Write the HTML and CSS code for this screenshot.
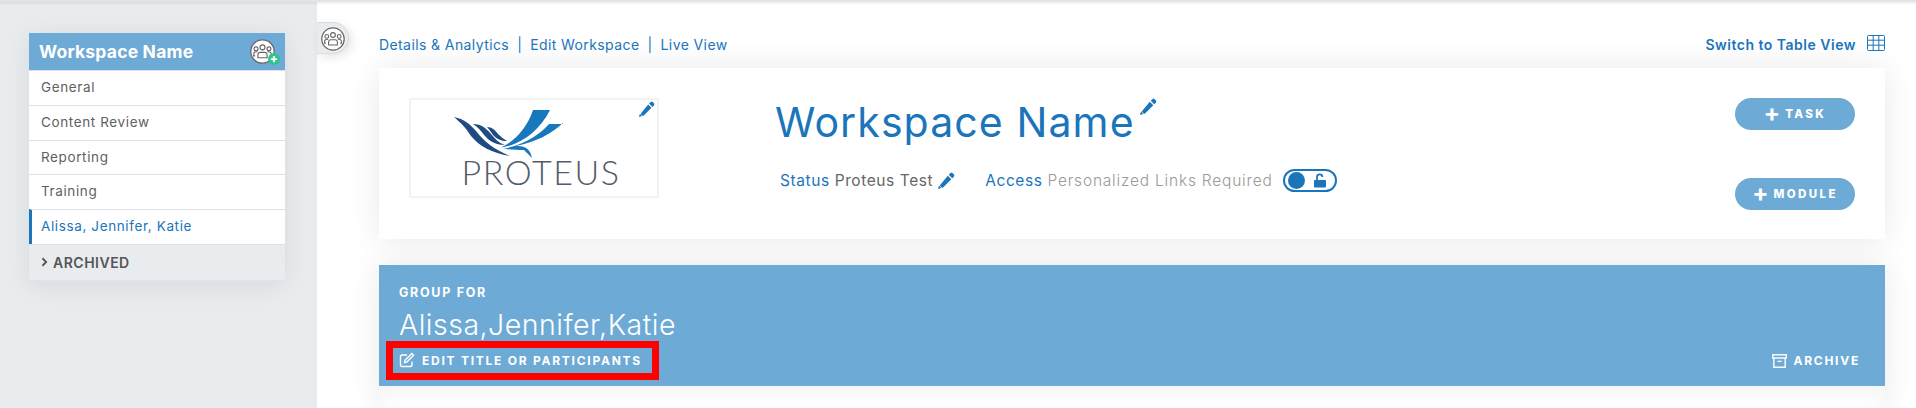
FILE: index.html
```html
<!DOCTYPE html>
<html lang="en">
<head>
    <meta charset="UTF-8">
    <meta name="viewport" content="width=device-width, initial-scale=1.0">
    <title>Workspace Name</title>
    <link rel="stylesheet" href="styles.css">
</head>
<body>
    <svg class="sprites" width="0" height="0">
        <symbol id="pencil" viewBox="0 0 16 16">
            <path d="M11.6 1.1a1.6 1.6 0 0 1 2.2 0l1.1 1.1a1.6 1.6 0 0 1 0 2.2l-1.5 1.5-3.3-3.3zM9.2 3.5l3.3 3.3-7.7 7.7-1 .4-2-2 .4-1z"/>
            <path d="M.9 12.8l2.3 2.3-3.2.9z"/>
        </symbol>
        <symbol id="people" viewBox="0 0 24 24">
            <circle cx="12" cy="12" r="11.2" fill="#fff" stroke="#666" stroke-width="1.2"/>
            <g fill="none" stroke="#666" stroke-width="1.1">
                <circle cx="12" cy="8" r="2.4"/>
                <circle cx="5.8" cy="9.4" r="1.9"/>
                <circle cx="18.2" cy="9.4" r="1.9"/>
                <path d="M7.6 18v-3a2.2 2.2 0 0 1 2.2-2.2h4.4a2.2 2.2 0 0 1 2.2 2.2v3z"/>
                <path d="M5 16.2H3.6v-1.6a2.4 2.4 0 0 1 2.4-2.4h1.2M19 16.2h1.4v-1.6a2.4 2.4 0 0 0-2.4-2.4h-1.2"/>
            </g>
        </symbol>
    </svg>

    <div class="page">
        <aside class="sidebar">
            <div class="side-card">
                <div class="side-head">
                    <span>Workspace Name</span>
                    <span class="add-group">
                        <svg class="people-icon"><use href="#people"/></svg>
                        <span class="add-badge">+</span>
                    </span>
                </div>
                <a class="side-item">General</a>
                <a class="side-item">Content Review</a>
                <a class="side-item">Reporting</a>
                <a class="side-item">Training</a>
                <a class="side-item active">Alissa, Jennifer, Katie</a>
                <div class="side-archived">
                    <svg class="chevron" viewBox="0 0 8 12"><path d="M1.5 1.5 6 6l-4.5 4.500" fill="none" stroke="#555" stroke-width="2.2"/></svg>
                    ARCHIVED
                </div>
            </div>
        </aside>

        <main class="main">
            <div class="side-tab">
                <svg class="tab-icon"><use href="#people"/></svg>
            </div>

            <div class="top-links">
                <div class="links">
                    <a>Details &amp; Analytics</a><span class="sep">|</span><a>Edit Workspace</a><span class="sep">|</span><a>Live View</a>
                </div>
                <a class="table-view">
                    Switch to Table View
                    <svg class="table-icon" viewBox="0 0 18 16" fill="none" stroke="#1b75bb">
                        <rect x=".5" y=".5" width="17" height="15" rx="1"/>
                        <path d="M.5 5.2h17M.5 10.2h17M6.2 .5v15M11.8 .5v15"/>
                    </svg>
                </a>
            </div>

            <section class="card">
                <div class="logo-box">
                    <svg class="edit-logo"><use href="#pencil"/></svg>
                    <svg class="logo-mark" viewBox="0 0 110 50">
                        <path fill="#1f4a82" d="M0 7c10 2 16 7 22 14 8 10 17 18 34 25-18-3-31-10-39-20C12 18 7 13 0 7z"/>
                        <path fill="#1f4a82" d="M19 14c8 0 13 4 18 10 4 5 8 9 14 11-8 0-15-3-20-9-4-5-7-9-12-12z"/>
                        <path fill="#1f4a82" d="M33 17c5 0 8 3 11 7 3 3 6 5 9 7-6 0-10-2-14-6-2-3-4-6-6-8z"/>
                        <path fill="#1878be" d="M96 0H79C74 16 62 30 50 36c-2 1-4 2-6 2 21-2 41-16 52-38z"/>
                        <path fill="#1878be" d="M109 14H95C86 24 72 34 49 39c3 0 14 1 21 1l8 8c-1-5-3-9-8-11-2-1-5-1-8-1 20-4 35-12 47-23z"/>
                    </svg>
                    <span class="logo-text">PROTEUS</span>
                </div>

                <div class="info">
                    <h1 class="title">Workspace Name<svg class="edit-title"><use href="#pencil"/></svg></h1>
                    <div class="meta">
                        <span class="meta-item">
                            <span class="label">Status</span> Proteus Test
                            <svg class="edit-small"><use href="#pencil"/></svg>
                        </span>
                        <span class="meta-item access">
                            <span class="label">Access</span> <span class="muted">Personalized Links Required</span>
                            <span class="toggle">
                                <span class="knob"></span>
                                <svg class="lock" viewBox="0 0 14 14"><path fill="#1b75bb" d="M1 6.500h10a1 1 0 0 1 1 1V13a1 1 0 0 1-1 1H1a1 1 0 0 1-1-1V7.500a1 1 0 0 1 1-1z"/><path fill="none" stroke="#1b75bb" stroke-width="1.8" d="M3 6.500V3.600a2.700 2.700 0 0 1 5.400 0"/></svg>
                            </span>
                        </span>
                    </div>
                </div>

                <div class="actions">
                    <button class="pill"><span class="plus">+</span>TASK</button>
                    <button class="pill"><span class="plus">+</span>MODULE</button>
                </div>
            </section>

            <section class="group">
                <div class="group-head">
                    <div class="group-for">GROUP FOR</div>
                    <div class="group-name">Alissa,Jennifer,Katie</div>
                    <div class="group-actions">
                        <a class="edit-link">
                            <svg class="edit-icon" viewBox="0 0 16 16" fill="none" stroke="#fff" stroke-width="1.4">
                                <path d="M13 9.500V13a1.500 1.500 0 0 1-1.500 1.500H3A1.500 1.500 0 0 1 1.500 13V4.500A1.500 1.500 0 0 1 3 3h5"/>
                                <path d="M6 8.200 12.800 1.400l1.800 1.800-6.800 6.800-2.300.5z"/>
                            </svg>
                            EDIT TITLE OR PARTICIPANTS
                        </a>
                        <a class="archive-link">
                            <svg class="archive-icon" viewBox="0 0 14 13" fill="none" stroke="#fff" stroke-width="1.3">
                                <rect x=".7" y=".7" width="12.600" height="3"/>
                                <path d="M1.700 3.700v8.600h10.600V3.700M5 6.800h4"/>
                            </svg>
                            ARCHIVE
                        </a>
                    </div>
                </div>
                <div class="group-body"></div>
            </section>
        </main>
    </div>
</body>
</html>
```

FILE: styles.css
```css
:root {
    --blue: #1b75bb;
    --light-blue: #6eaad6;
    --side-bg: #e9ecef;
    --line: #dee2e8;
    --text: #5f5f5f;
}
* {
    box-sizing: border-box;
}
html, body {
    margin: 0;
    height: 408px;
    overflow: hidden;
    background: #fff;
}
body {
    font-family: Inter, "Open Sans", sans-serif;
    font-size: 14px;
    color: var(--text);
    position: relative;
}
body::before {
    content: "";
    position: absolute;
    top: 0;
    left: 0;
    right: 0;
    height: 2px;
    background: #e4e4e4;
    box-shadow: 0 1px 3px rgba(0, 0, 0, 0.12);
    z-index: 5;
}
.sprites {
    position: absolute;
}
.page {
    display: flex;
    height: 408px;
}

/* sidebar */
.sidebar {
    width: 317px;
    flex: none;
    background: var(--side-bg);
    padding: 33px 32px 0 29px;
}
.side-card {
    background: #fff;
    box-shadow: 0 4px 24px rgba(0, 0, 0, 0.08);
}
.side-head {
    display: flex;
    align-items: center;
    justify-content: space-between;
    height: 37px;
    padding: 0 5px 0 10px;
    background: var(--light-blue);
    color: #fff;
    font-weight: 700;
    font-size: 17.5px;
    letter-spacing: 0.2px;
}
.add-group {
    position: relative;
    width: 30px;
    height: 25px;
}
.people-icon {
    width: 25px;
    height: 25px;
    display: block;
}
.add-badge {
    position: absolute;
    right: 0;
    bottom: -1px;
    width: 12px;
    height: 12px;
    border-radius: 50%;
    background: #2fc391;
    color: #fff;
    font-size: 12px;
    font-weight: 800;
    line-height: 11px;
    text-align: center;
}
.side-item {
    display: block;
    height: 34.8px;
    padding: 0 12px;
    line-height: 33px;
    font-size: 13.5px;
    letter-spacing: 0.62px;
    border-top: 1px solid var(--line);
}
.side-item.active {
    color: var(--blue);
    border-left: 3px solid var(--blue);
    padding-left: 9px;
}
.side-archived {
    display: flex;
    align-items: center;
    gap: 5px;
    height: 38px;
    padding: 0 12px;
    background: var(--side-bg);
    border-top: 1px solid var(--line);
    border-bottom: 2px solid #e0e4e8;
    font-size: 14px;
    font-weight: 600;
    letter-spacing: 0.5px;
    color: #555;
}
.chevron {
    width: 7px;
    height: 10px;
}

/* main column */
.main {
    flex: 1;
    position: relative;
    padding: 0 31px 0 62px;
}
.side-tab {
    position: absolute;
    left: 0;
    top: 22px;
    width: 32px;
    height: 32px;
    padding: 4px;
    background: var(--side-bg);
    border: 1px solid #dcdcdc;
    border-left: 0;
    border-radius: 0 16px 16px 0;
    box-shadow: 3px 3px 10px rgba(0, 0, 0, 0.1);
}
.tab-icon {
    width: 24px;
    height: 24px;
    display: block;
}
.top-links {
    display: flex;
    align-items: center;
    justify-content: space-between;
    height: 68px;
    padding-top: 21px;
    font-size: 14px;
    letter-spacing: 0.4px;
    color: var(--blue);
}
.sep {
    margin: 0 8px;
}
.table-view {
    display: flex;
    align-items: center;
    gap: 11px;
    font-weight: 600;
    letter-spacing: 0.5px;
}
.table-icon {
    width: 18px;
    height: 16px;
    margin-top: -3px;
}

/* workspace card */
.card {
    display: flex;
    height: 171px;
    padding: 30px 30px 0;
    background: #fff;
    box-shadow: 0 0 30px rgba(0, 0, 0, 0.09);
}
.logo-box {
    position: relative;
    width: 250px;
    height: 100px;
    flex: none;
    display: flex;
    flex-direction: column;
    align-items: center;
    padding-top: 10px;
    border: 2px solid #f1f3f6;
}
.edit-logo {
    position: absolute;
    top: 1px;
    right: 2px;
    width: 16px;
    height: 16px;
    fill: var(--blue);
}
.logo-mark {
    width: 110px;
    height: 50px;
    margin-left: -51px;
    flex: none;
}
.logo-text {
    font-family: Lato, sans-serif;
    font-weight: 300;
    font-size: 34px;
    line-height: 26px;
    margin: -1px 0 0 14px;
    letter-spacing: 1.6px;
    color: #555b68;
}
.info {
    flex: 1;
    padding-left: 116px;
}
.title {
    margin: 0;
    font-size: 41px;
    font-weight: 400;
    line-height: 48px;
    letter-spacing: 1.1px;
    color: var(--blue);
    display: flex;
    align-items: flex-start;
}
.edit-title {
    width: 17px;
    height: 17px;
    margin: 0 0 0 5px;
    fill: var(--blue);
}
.meta {
    display: flex;
    align-items: center;
    gap: 30px;
    margin-top: 23px;
    padding-left: 5px;
    font-size: 15.5px;
    letter-spacing: 0.58px;
    color: #666;
}
.meta-item {
    display: flex;
    align-items: center;
    gap: 5px;
}
.label {
    color: var(--blue);
}
.muted {
    color: #999;
    font-weight: 300;
    letter-spacing: 0.8px;
}
.edit-small {
    width: 17px;
    height: 17px;
    fill: var(--blue);
}
.toggle {
    display: flex;
    align-items: center;
    justify-content: space-between;
    width: 54px;
    height: 23px;
    margin-left: 5px;
    padding: 0 7px 0 3px;
    border: 2px solid var(--blue);
    border-radius: 12px;
}
.knob {
    width: 17px;
    height: 17px;
    border-radius: 50%;
    background: var(--blue);
}
.lock {
    width: 14px;
    height: 15px;
}
.actions {
    display: flex;
    flex-direction: column;
    gap: 48px;
}
.pill {
    display: flex;
    align-items: center;
    justify-content: center;
    gap: 5px;
    width: 120px;
    height: 32px;
    padding: 0;
    border: 0;
    border-radius: 16px;
    background: var(--light-blue);
    color: #fff;
    font-family: inherit;
    font-size: 11.5px;
    font-weight: 800;
    letter-spacing: 2.4px;
}
.plus {
    font-size: 24px;
    font-weight: 700;
    line-height: 18px;
    letter-spacing: 0;
    margin-top: -3px;
}

/* group banner */
.group {
    margin-top: 26px;
    box-shadow: 0 0 30px rgba(0, 0, 0, 0.09);
}
.group-head {
    height: 121px;
    padding: 21px 25px 0 20px;
    background: var(--light-blue);
    color: #fff;
}
.group-for {
    font-size: 12.5px;
    font-weight: 700;
    letter-spacing: 1.7px;
    line-height: 14px;
}
.group-name {
    margin-top: 9px;
    font-size: 28.5px;
    font-weight: 300;
    letter-spacing: 0.5px;
    line-height: 32px;
}
.group-actions {
    display: flex;
    align-items: center;
    justify-content: space-between;
    margin: 0 0 0 -13px;
    font-size: 12px;
    font-weight: 700;
    letter-spacing: 1.75px;
}
.edit-link {
    display: flex;
    align-items: center;
    gap: 7px;
    width: 273px;
    height: 39px;
    padding: 0 0 1px 6px;
    border: 7px solid #f00;
}
.edit-icon {
    width: 16px;
    height: 16px;
}
.archive-link {
    display: flex;
    align-items: center;
    gap: 6px;
}
.archive-icon {
    width: 15px;
    height: 14px;
}
.group-body {
    height: 22px;
    background: #fff;
    box-shadow: inset 0 10px 20px rgba(0, 0, 0, 0.04);
}
```
